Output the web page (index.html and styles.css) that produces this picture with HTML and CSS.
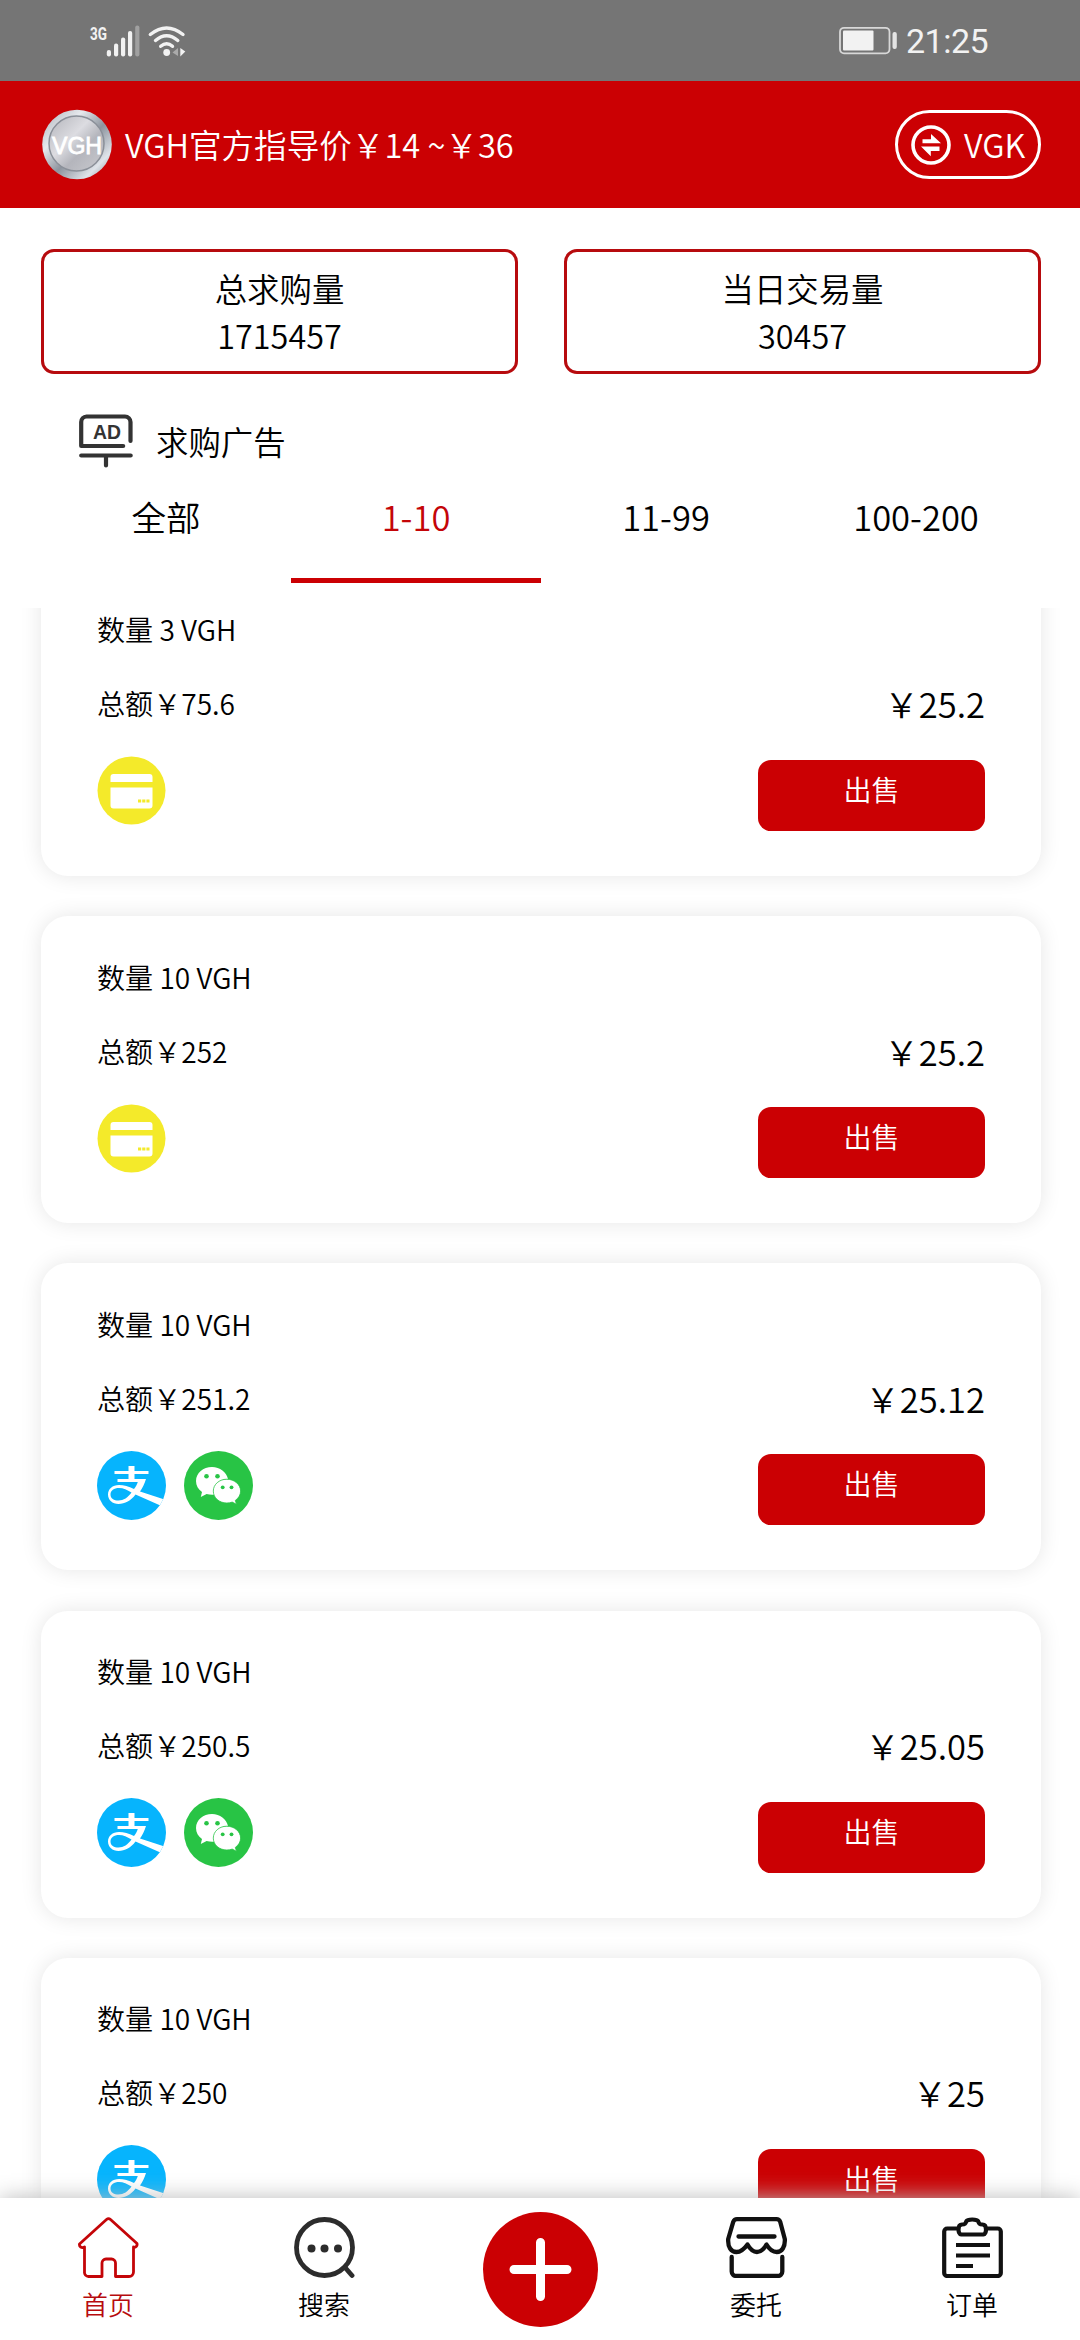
FILE: index.html
```html
<!DOCTYPE html>
<html lang="zh-CN">
<head>
<meta charset="utf-8">
<title>VGH</title>
<link rel="stylesheet" href="styles.css">
</head>
<body>
<svg class="sprite" aria-hidden="true">
  <symbol id="card" viewBox="0 0 69 69">
    <circle cx="34.5" cy="34.5" r="34" fill="#f4ea2a"/>
    <path d="M13.500 26v-5a3 3 0 0 1 3-3h36a3 3 0 0 1 3 3v5z M13.500 31.500h42v18a3 3 0 0 1-3 3h-36a3 3 0 0 1-3-3z" fill="#fff"/>
    <path d="M41 45h11.500" stroke="#f4ea2a" stroke-width="3" stroke-dasharray="3.200 1"/>
  </symbol>
  <symbol id="alipay" viewBox="0 0 69 69">
    <clipPath id="disc"><circle cx="34.500" cy="34.500" r="34.500"/></clipPath>
    <g clip-path="url(#disc)">
      <rect width="69" height="69" fill="#06b4fd"/>
      <path d="M31.500 15h6v5h14v3h-14v5h11.500c-1.500 5-3.500 9-6 12.500L69 49v8L38.500 43.500C34 49.500 28 53 21.500 53c-6 0-10.500-4-10.500-9.500S15.500 34 22 34c5 0 9.500 1.500 15 4 2-2.500 3-4.500 3.800-7H20.500v-3h11v-5H17.500v-3h14z M22 37c-5 0-8.500 2.500-8.500 6.500s3.500 6 8 6c5 0 9.500-3 13-8-4.500-2.500-8-4.500-12.500-4.500z" fill="#fff"/>
    </g>
  </symbol>
  <symbol id="wechat" viewBox="0 0 69 69">
    <circle cx="34.500" cy="34.500" r="34.500" fill="#28c445"/>
    <path d="M28 16c-8.800 0-16 6-16 14 0 4.500 2.200 8.300 6 11l-1.200 5 5.800-3c2.600.8 5.800 1 8.500.6A12.500 12.500 0 0 1 44 28C42.500 21 36 16 28 16z" fill="#fff"/>
    <path d="M42.800 28.200c-7.600 0-13.500 5.300-13.500 11.900s5.900 11.900 13.500 11.900c2 0 3.800-.3 5.400-.9l4.300 2.200-1.200-3.900c3.200-2.200 5.300-5.500 5.300-9.300 0-6.600-6.200-11.900-13.800-11.900z" fill="#fff" stroke="#28c445" stroke-width=".8"/>
    <g fill="#28c445"><circle cx="22.500" cy="25.200" r="2.300"/><circle cx="33.500" cy="25.200" r="2.300"/><circle cx="38.700" cy="36.300" r="1.900"/><circle cx="47.500" cy="36.300" r="1.900"/></g>
  </symbol>
</svg>

<div class="screen">
  <div class="status">
    <svg class="signal" width="100" height="44" viewBox="88 18 100 44">
      <text class="net" x="90" y="38.500" textLength="17" lengthAdjust="spacingAndGlyphs">3G</text>
      <g fill="#f2f2f2"><rect x="106.800" y="49" width="4.200" height="6.500" rx="2"/><rect x="114" y="42.500" width="4.200" height="13" rx="2"/><rect x="121" y="36.500" width="4.200" height="19" rx="2"/><rect x="128" y="30" width="4.200" height="25.500" rx="2"/></g>
      <rect x="135.200" y="24.500" width="4.200" height="31" rx="2" fill="#a0a0a0"/>
      <g fill="none" stroke="#f2f2f2" stroke-width="3.400" stroke-linecap="round"><path d="M150.300 33.500q16.300-13 32.700 0M155.500 39.500q11.100-9.500 22.300 0M160.700 45.300q6-5 11.800 0"/></g>
      <circle cx="166.700" cy="51.500" r="3.400" fill="#f2f2f2"/>
      <path d="M178 47v8l-5.500-3.500z" fill="#aaa"/><path d="M180.300 47v8.500l5-5z" fill="#f2f2f2"/>
    </svg>
    <div class="status-right">
      <svg width="59" height="30" viewBox="839 26 59 30">
        <rect x="841" y="27.800" width="49.500" height="25.500" rx="4" fill="none" stroke="#d8d8d8" stroke-width="1.800"/>
        <rect x="844" y="30.500" width="30.500" height="20" rx="1" fill="#f2f2f2"/>
        <rect x="893.500" y="32" width="4.300" height="17" rx="2" fill="#e4e4e4"/>
      </svg>
      <span class="clock">21:25</span>
    </div>
  </div>

  <header class="header">
    <div class="brand">
      <svg width="70" height="71" viewBox="0 0 70 71">
        <defs>
          <linearGradient id="rim" x1="0" y1="0" x2="1" y2="1"><stop offset="0" stop-color="#a9adb5"/><stop offset=".3" stop-color="#e6e9ed"/><stop offset=".55" stop-color="#8d949e"/><stop offset=".8" stop-color="#dfe4ea"/><stop offset="1" stop-color="#7b838e"/></linearGradient>
          <linearGradient id="face" x1="0" y1="0" x2="1" y2="1"><stop offset="0" stop-color="#b3b4ba"/><stop offset=".4" stop-color="#dcdce1"/><stop offset=".62" stop-color="#b4b5bc"/><stop offset="1" stop-color="#c9cad0"/></linearGradient>
        </defs>
        <circle cx="35" cy="35.500" r="34.800" fill="url(#rim)"/>
        <circle cx="34.500" cy="34.500" r="27.500" fill="url(#face)" stroke="#8b9099" stroke-width="1.500"/>
        <text class="coin-text" x="10" y="44.500" textLength="50" lengthAdjust="spacingAndGlyphs">VGH</text>
      </svg>
      <span class="guide">VGH官方指导价￥14 ~￥36</span>
    </div>
    <div class="switch">
      <svg width="40" height="40" viewBox="0 0 40 40"><circle cx="20" cy="20" r="18" fill="none" stroke="#fff" stroke-width="3.600"/><path d="M11.500 14.300h8.500V9l10 9.300H11.500zM28.500 21.500H10l9.800 9.800v-5.300h8.700z" fill="#fff"/></svg>
      <span class="guide">VGK</span>
    </div>
  </header>

  <section class="stats">
    <div class="stat"><span>总求购量</span><span>1715457</span></div>
    <div class="stat"><span>当日交易量</span><span>30457</span></div>
  </section>

  <div class="title">
    <svg width="54" height="54" viewBox="0 0 54 54"><g fill="none" stroke="#333" stroke-width="4.200" stroke-linecap="round" stroke-linejoin="round"><path d="M51.500 27V8a5.500 5.500 0 0 0-5.500-5.500H7.500A5.500 5.500 0 0 0 2.200 8v24h42M2.200 41.500h49.500M27 41.500v10"/></g><text class="ad-text" x="14" y="25" textLength="28" lengthAdjust="spacingAndGlyphs">AD</text></svg>
    <span>求购广告</span>
  </div>

  <nav class="tabs"><span class="tab">全部</span><span class="tab active">1-10</span><span class="tab">11-99</span><span class="tab">100-200</span></nav>

  <main class="list">
    <article class="order"><div class="qty">数量 3 VGH</div><div class="sum"><span>总额￥75.6</span><span class="price">￥25.2</span></div><div class="foot"><div class="pays"><svg><use href="#card"/></svg></div><div class="sell">出售</div></div></article>
    <article class="order"><div class="qty">数量 10 VGH</div><div class="sum"><span>总额￥252</span><span class="price">￥25.2</span></div><div class="foot"><div class="pays"><svg><use href="#card"/></svg></div><div class="sell">出售</div></div></article>
    <article class="order"><div class="qty">数量 10 VGH</div><div class="sum"><span>总额￥251.2</span><span class="price">￥25.12</span></div><div class="foot"><div class="pays"><svg><use href="#alipay"/></svg><svg><use href="#wechat"/></svg></div><div class="sell">出售</div></div></article>
    <article class="order"><div class="qty">数量 10 VGH</div><div class="sum"><span>总额￥250.5</span><span class="price">￥25.05</span></div><div class="foot"><div class="pays"><svg><use href="#alipay"/></svg><svg><use href="#wechat"/></svg></div><div class="sell">出售</div></div></article>
    <article class="order"><div class="qty">数量 10 VGH</div><div class="sum"><span>总额￥250</span><span class="price">￥25</span></div><div class="foot"><div class="pays"><svg><use href="#alipay"/></svg></div><div class="sell">出售</div></div></article>
  </main>

  <footer class="bar">
    <div class="item current"><svg viewBox="0 0 61 61"><path d="M6.500 30v25a4 4 0 0 0 4 4.500H24V46a4 4 0 0 1 4-4h5.500a4 4 0 0 1 4 4v13.500H51a4.500 4.500 0 0 0 4.500-4.500V30c2.500 1 4-1.500 3.500-3.500L32.500 2.500a3 3 0 0 0-4 0L1.500 27c-.5 2.500 2 4.500 5 3z" fill="none" stroke="#c40508" stroke-width="2.800" stroke-linejoin="round"/></svg><span>首页</span></div>
    <div class="item"><svg viewBox="0 0 61 61"><g fill="none" stroke="#2c2c2c" stroke-width="4.800" stroke-linecap="round"><circle cx="30.500" cy="30.500" r="28"/><path d="M51.500 51l6.500 7.500"/></g><g fill="#2c2c2c"><circle cx="17.500" cy="31.500" r="4"/><circle cx="30.500" cy="31.500" r="4"/><circle cx="44" cy="31.500" r="4"/></g></svg><span>搜索</span></div>
    <div class="item"><svg class="plus" viewBox="0 0 115 115"><circle cx="57.500" cy="57.500" r="57.500" fill="#cb0003"/><path d="M57.500 30.500v54M31 57.500h53" stroke="#fff" stroke-width="9" stroke-linecap="round"/></svg></div>
    <div class="item"><svg viewBox="0 0 61 61"><g fill="none" stroke="#111" stroke-width="4.300" stroke-linecap="round" stroke-linejoin="round"><path d="M11 2.200h39.500a4 4 0 0 1 3.700 2.500L58.800 22c.5 8-3 13-8 13s-8-3.500-10.300-7.500C38 32 35 35 31 35s-7-3-9.500-7.500C19 31 15.500 35 10.500 35 5 35 1.700 30 2.200 22L7.300 4.700A4 4 0 0 1 11 2.200zM12.500 19.500h36M5.700 40v14.500a4.500 4.500 0 0 0 4.500 4.500h41.600a4.500 4.500 0 0 0 4.500-4.500V40"/></g></svg><span>委托</span></div>
    <div class="item"><svg viewBox="0 0 61 61"><g fill="none" stroke="#111" stroke-width="4.200" stroke-linejoin="round"><path d="M17 11.500H5.200a3 3 0 0 0-3 3V56a3 3 0 0 0 3 3h50.600a3 3 0 0 0 3-3V14.500a3 3 0 0 0-3-3H44.500M20 7.500c3 0 3.500-1 4.500-3.500 1-2 10.500-2 11.500 0 1 2.500 1.500 3.500 4.500 3.500 5 0 4 10 1 10H19c-3 0-4-10 1-10zM14 28h34M14 38.500h34M14 49h17"/></g></svg><span>订单</span></div>
  </footer>
</div>
</body>
</html>
```
FILE: styles.css
```css
* { box-sizing: border-box; }
body {
  margin: 0;
  background: #fff;
  color: #000;
  font-family: "Noto Sans CJK SC", sans-serif;
  font-size: 32.4px;
  font-weight: 350;
}
svg { display: block; flex: none; }
.sprite { width: 0; height: 0; position: absolute; }
.screen {
  width: 1080px;
  height: 2340px;
  display: flex;
  flex-direction: column;
  overflow: hidden;
}
.status {
  flex: none;
  height: 81px;
  padding: 0 90px 0 88px;
  background: #757575;
  display: flex;
  align-items: center;
  justify-content: space-between;
}
.status-right { display: flex; align-items: center; gap: 9px; }
.clock {
  width: 84px;
  font: 400 34px/40px Roboto, sans-serif;
  letter-spacing: -.5px;
  color: #f2f2f2;
  white-space: nowrap;
}
.net { font: 700 19px Roboto, sans-serif; fill: #f2f2f2; }
.header {
  flex: none;
  height: 127px;
  padding: 0 39px 0 42px;
  background: #cb0003;
  color: #fff;
  display: flex;
  align-items: center;
  justify-content: space-between;
}
.brand { display: flex; align-items: center; gap: 13px; }
.guide { padding-bottom: 3px; font-size: 32.6px; }
.coin-text {
  font: 400 23px "Liberation Sans", sans-serif;
  fill: #fff;
  stroke: #fff;
  stroke-width: .8px;
}
.ad-text { font: 700 21px "Liberation Sans", sans-serif; fill: #333; }
.switch {
  width: 146px;
  height: 69px;
  border: 3px solid #fff;
  border-radius: 35px;
  padding-left: 13px;
  display: flex;
  align-items: center;
  gap: 13px;
}
.stats {
  flex: none;
  margin: 41px 39px 0 41px;
  display: grid;
  grid-template-columns: 477px 477px;
  justify-content: space-between;
}
.stat {
  height: 125px;
  border: 3px solid #b70b0e;
  border-radius: 13px;
  display: flex;
  flex-direction: column;
  align-items: center;
  padding-top: 12px;
  line-height: 47px;
}
.title {
  flex: none;
  height: 54px;
  margin: 40px 0 0 79px;
  display: flex;
  align-items: center;
  gap: 23px;
}
.title span { padding-bottom: 2px; }
.tabs {
  flex: none;
  height: 140px;
  padding: 23px 39px 25px 41px;
  display: grid;
  grid-template-columns: repeat(4, 250px);
  font-size: 34.56px;
  line-height: 50px;
  text-align: center;
}
.active { color: #c40508; border-bottom: 5px solid #cb0003; }
.list {
  flex: 1;
  min-height: 0;
  overflow: hidden;
  padding: 0 39px 0 41px;
}
.order {
  height: 307px;
  margin-bottom: 40.3px;
  padding: 36.5px 56px 0;
  border-radius: 27px;
  background: #fff;
  box-shadow: 0 0 21.6px rgba(0, 0, 0, .1);
  font-size: 28.08px;
  line-height: 48px;
}
.order:first-child { margin-top: -39.3px; }
.sum { height: 48px; margin-top: 26px; display: flex; justify-content: space-between; }
.price { font-size: 34.56px; }
.foot { margin-top: 29px; display: flex; justify-content: space-between; }
.pays { display: flex; gap: 18px; }
.pays svg { width: 69px; height: 69px; }
.sell {
  width: 227px;
  height: 71px;
  margin-top: 3.5px;
  border-radius: 13px;
  background: #cb0003;
  color: #fff;
  line-height: 58px;
  text-align: center;
}
.bar {
  flex: none;
  position: relative;
  height: 142px;
  background: #fff;
  box-shadow: 0 0 21.6px #bbb;
  display: grid;
  grid-template-columns: repeat(5, 1fr);
}
.item {
  display: flex;
  flex-direction: column;
  align-items: center;
  padding-top: 19px;
  font-size: 25.92px;
  line-height: 36px;
}
.item svg { width: 61px; height: 61px; margin-bottom: 8px; }
.item .plus { width: 115px; height: 115px; margin-top: -5px; }
.current { color: #b70b0e; }
```
